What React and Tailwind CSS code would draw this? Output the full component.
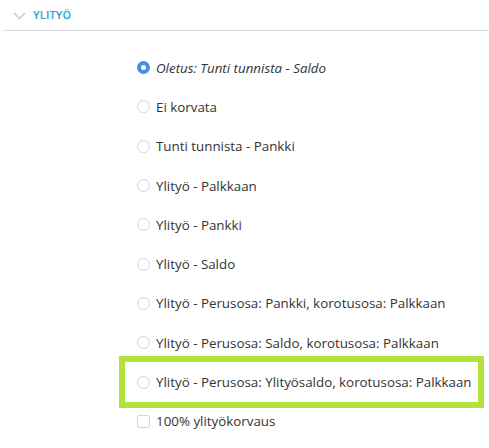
import React from 'react';

const options = [
  { label: 'Oletus: Tunti tunnista - Saldo', checked: true, italic: true },
  { label: 'Ei korvata' },
  { label: 'Tunti tunnista - Pankki' },
  { label: 'Ylityö - Palkkaan' },
  { label: 'Ylityö - Pankki' },
  { label: 'Ylityö - Saldo' },
  { label: 'Ylityö - Perusosa: Pankki, korotusosa: Palkkaan' },
  { label: 'Ylityö - Perusosa: Saldo, korotusosa: Palkkaan' },
  { label: 'Ylityö - Perusosa: Ylityösaldo, korotusosa: Palkkaan', highlight: true },
];

const Radio = ({ checked }) =>
  checked ? (
    <span className="w-[13px] h-[13px] rounded-full bg-[#4a8ee0] flex items-center justify-center shrink-0">
      <span className="w-[5px] h-[5px] rounded-full bg-white" />
    </span>
  ) : (
    <span className="w-[13px] h-[13px] rounded-full border border-[#cfd4e0] bg-white shrink-0" />
  );

const App = () => {
  return (
    <div className="w-[489px] h-[448px] bg-white overflow-hidden text-[#333] font-['Open_Sans',sans-serif]">
      {/* section header */}
      <div className="ml-[3px] h-[31px] border-b border-[#dcdcdc] flex items-center">
        <svg width="13" height="8" viewBox="0 0 13 8" className="ml-[10px] mt-[1px]">
          <path d="M1 1l5.5 5.5L12 1" fill="none" stroke="#c8c8c8" strokeWidth="1.5" />
        </svg>
        <span className="ml-[7px] text-[11px] font-semibold text-[#1ea1dc] tracking-[0.2px]">YLITYÖ</span>
      </div>

      <div className="pl-[137px] pt-[17px]">
        {options.map((o) => (
          <div key={o.label} className="relative h-[39.3px] flex items-center">
            {o.highlight && (
              <div className="absolute left-[-18px] right-[5px] top-[-6px] bottom-[-6.5px] border-[6px] border-[#b2e23e]" />
            )}
            <Radio checked={o.checked} />
            <span className={`ml-[6px] text-[13.35px] leading-[18px] ${o.italic ? 'italic' : ''}`}>{o.label}</span>
          </div>
        ))}
        <div className="h-[39.3px] flex items-center">
          <span className="w-[13px] h-[13px] rounded-[2px] border border-[#cfd4e0] bg-white shrink-0" />
          <span className="ml-[6px] text-[13.35px] leading-[18px]">100% ylityökorvaus</span>
        </div>
      </div>
    </div>
  );
};

export default App;
